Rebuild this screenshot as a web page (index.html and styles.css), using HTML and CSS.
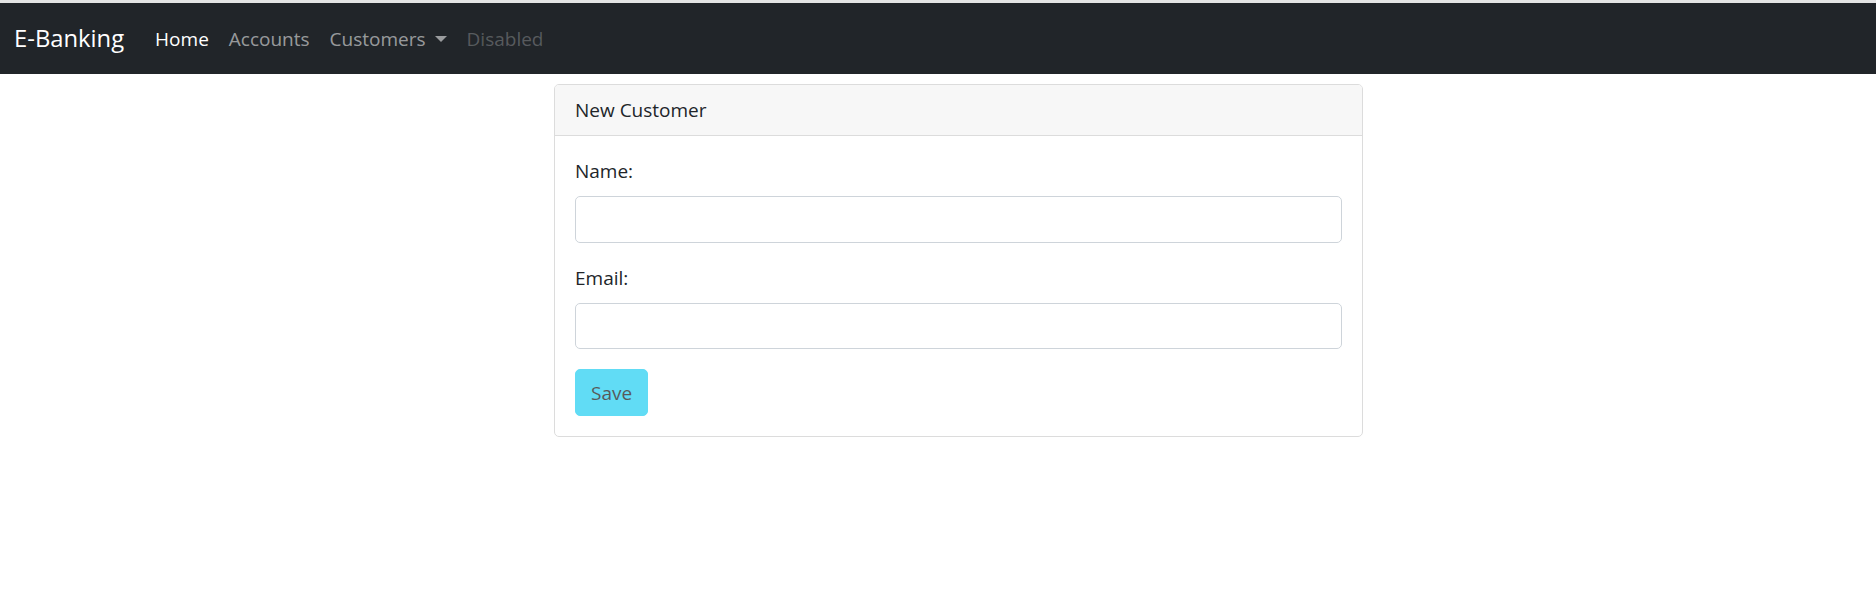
FILE: index.html
```html
<!DOCTYPE html>
<html lang="en">
<head>
<meta charset="utf-8">
<title>E-Banking</title>
<link rel="stylesheet" href="styles.css">
</head>
<body>
<div class="chrome-edge"></div>
<nav class="navbar">
  <a class="brand" href="#">E-Banking</a>
  <ul class="nav">
    <li><a class="nav-link active" href="#">Home</a></li>
    <li><a class="nav-link" href="#">Accounts</a></li>
    <li><a class="nav-link dropdown-toggle" href="#">Customers</a></li>
    <li><span class="nav-link disabled">Disabled</span></li>
  </ul>
</nav>
<main class="page">
  <section class="card">
    <div class="card-header">New Customer</div>
    <form class="card-body">
      <div class="form-group">
        <label class="form-label" for="name">Name:</label>
        <input class="form-control" id="name" type="text">
      </div>
      <div class="form-group">
        <label class="form-label" for="email">Email:</label>
        <input class="form-control" id="email" type="text">
      </div>
      <button class="btn btn-info" type="button" disabled>Save</button>
    </form>
  </section>
</main>
</body>
</html>
```
FILE: styles.css
```css
* { box-sizing: border-box; }
html, body { margin: 0; padding: 0; background: #fff; }
body {
  font-family: "Open Sans", "Noto Sans", "DejaVu Sans", sans-serif;
  font-size: 19px;
  color: #212529;
}
.chrome-edge { height: 3px; background: #e4e4e4; }
.navbar {
  height: 71px;
  background: #212529;
  display: flex;
  align-items: center;
  padding-left: 14px;
}
.brand {
  font-size: 23.8px;
  line-height: 37px;
  color: #fff;
  text-decoration: none;
  margin-right: 21px;
}
.nav {
  list-style: none;
  margin: 0;
  padding: 0;
  display: flex;
  align-items: center;
}
.nav-link {
  display: block;
  padding: 0 10px;
  font-size: 19px;
  line-height: 30px;
  color: rgba(255,255,255,.55);
  text-decoration: none;
}
.nav-link.active { color: #fff; }
.nav-link.disabled { color: rgba(255,255,255,.25); }
.dropdown-toggle::after {
  content: "";
  display: inline-block;
  margin-left: 9px;
  vertical-align: 4px;
  border-top: 6px solid;
  border-left: 6px solid transparent;
  border-right: 6px solid transparent;
}
.page { padding: 10px 0 0 554px; }
.card {
  width: 809px;
  border: 1px solid #dcdcdc;
  border-radius: 5px;
  overflow: hidden;
}
.card-header {
  padding: 10px 20px;
  line-height: 30px;
  background: #f7f7f7;
  border-bottom: 1px solid #dcdcdc;
}
.card-body { padding: 20px; margin: 0; }
.form-group { margin-bottom: 20px; }
.form-label {
  display: block;
  line-height: 30px;
  margin-bottom: 10px;
}
.form-control {
  display: block;
  width: 100%;
  height: 46.5px;
  border: 1px solid #ced4da;
  border-radius: 5px;
  background: #fff;
  font: inherit;
  padding: 0 15px;
}
.btn {
  display: block;
  height: 47px;
  padding: 0 15px;
  border: 1px solid transparent;
  border-radius: 5px;
  font: inherit;
  line-height: 30px;
}
.btn-info { background: #0dcaf0; color: #000; border-color: #0dcaf0; }
.btn:disabled { opacity: .65; }
```
